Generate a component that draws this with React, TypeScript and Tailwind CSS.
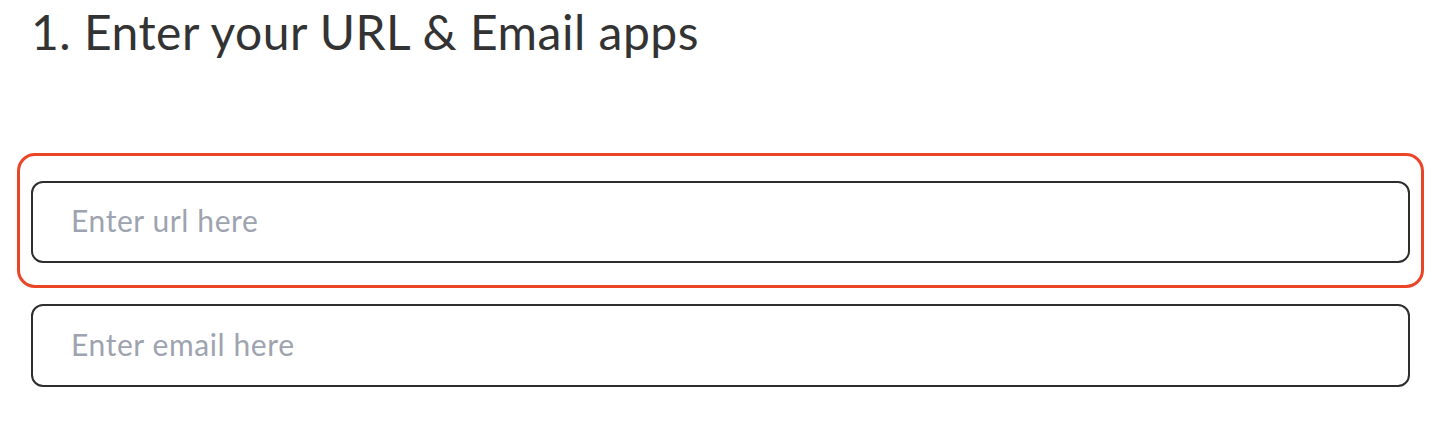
import { useState } from "react"

export default function App() {
  const [url, setUrl] = useState("")
  const [email, setEmail] = useState("")

  return (
    <div className="w-[1434px] h-[422px] bg-white pl-[17px] pr-[10px] pt-[2px] font-['Lato',sans-serif] text-[#333333]">
      <h1 className="pl-[14px] text-[48px] leading-[60px] font-normal tracking-[0.5px]">1. Enter your URL &amp; Email apps</h1>

      {/* highlighted step */}
      <div className="mt-[91px] rounded-[18px] border-[3px] border-[#ea4527] px-[11px] pt-[25px] pb-[22px]">
        <input
          value={url}
          onChange={(e) => setUrl(e.target.value)}
          placeholder="Enter url here"
          className="block h-[82px] w-full rounded-[12px] border-2 border-[#2e2e2e] bg-white px-[38px] pb-[4px] text-[30px] tracking-[0.6px] text-[#333333] placeholder:text-[#9ea3b0] outline-none"
        />
      </div>

      <div className="mt-[16px] px-[14px]">
        <input
          value={email}
          onChange={(e) => setEmail(e.target.value)}
          placeholder="Enter email here"
          className="block h-[83px] w-full rounded-[12px] border-2 border-[#2e2e2e] bg-white px-[38px] pb-[4px] text-[30px] tracking-[0.6px] text-[#333333] placeholder:text-[#9ea3b0] outline-none"
        />
      </div>
    </div>
  )
}
